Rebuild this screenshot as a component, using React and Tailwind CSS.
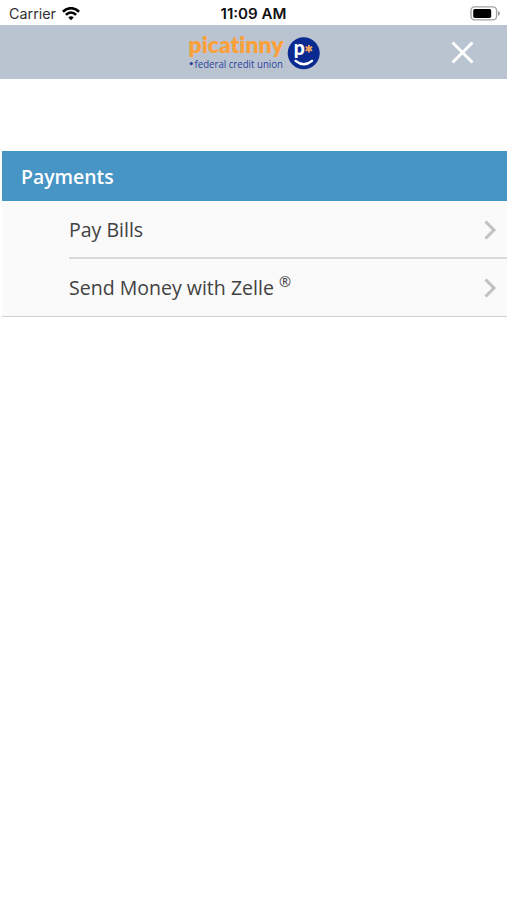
function Wifi() {
  return (
    <svg width="18" height="14" viewBox="0 0 18 14" fill="none" stroke="#000" strokeWidth="2.7">
      <path d="M.9 4.7C5.5 .1 12.5 .1 17.1 4.7" />
      <path d="M3.9 7.9C7 4.9 11 4.9 14.1 7.9" />
      <path d="M6.3 10.4C7.8 8.9 10.2 8.9 11.7 10.4L9 13.2Z" fill="#000" stroke="none" />
    </svg>
  );
}

function Battery() {
  return (
    <svg width="30" height="16" viewBox="0 0 30 16">
      <rect x="1" y=".9" width="25.6" height="13" rx="3.6" fill="#fff" stroke="#a3a3a3" strokeWidth="1.4" />
      <rect x="3.2" y="3.1" width="18" height="8.8" rx="1.6" fill="#000" />
      <path d="M28 5Q30 5.7 30 7.4T28 9.8Z" fill="#9c9c9c" />
    </svg>
  );
}

function Logo() {
  return (
    <svg width="134" height="48" viewBox="0 -4 134 48" className="block overflow-visible">
      <text x="1.5" y="20" textLength="95" lengthAdjust="spacingAndGlyphs" fontFamily="Lato, sans-serif" fontWeight="800" fontSize="23" fill="#fba03a" className="[font-variant-ligatures:none]">picatinny</text>
      <circle cx="4.3" cy="30.6" r="1.7" fill="#2a429c" />
      <text x="7.5" y="35.4" textLength="88.5" lengthAdjust="spacingAndGlyphs" fontFamily="'Open Sans', sans-serif" fontWeight="500" fontSize="11.5" fill="#2a429c">federal credit union</text>
      <circle cx="116.7" cy="20.3" r="16" fill="#0a2a92" />
      <text x="106.8" y="21.6" textLength="11" lengthAdjust="spacingAndGlyphs" fontFamily="Lato, sans-serif" fontWeight="900" fontSize="20" fill="#fff">p</text>
      <path d="M121.9 12V19.6M118.6 13.9L125.2 17.7M118.6 17.7L125.2 13.9" stroke="#f0a35c" strokeWidth="1.9" />
      <path d="M108.6 27.8Q116.8 34.6 125 27.8" fill="none" stroke="#fff" strokeWidth="2.4" strokeLinecap="round" />
    </svg>
  );
}

function Chevron() {
  return (
    <svg width="13" height="20" viewBox="0 0 13 20" fill="none" stroke="#c1c1c1" strokeWidth="3">
      <path d="M1.5 1.5L10 10L1.5 18.5" />
    </svg>
  );
}

function Row({ children }) {
  return (
    <div className="flex h-[57px] shrink-0 items-center justify-between pr-[10px]">
      <span className="text-[19.55px] leading-[28px] text-[#414141]">{children}</span>
      <Chevron />
    </div>
  );
}

export default function App() {
  return (
    <div className="h-[900px] w-[507px] overflow-hidden bg-white font-['Open_Sans','Noto_Sans',sans-serif]">
      <div className="grid h-[25px] grid-cols-3 items-center font-['Inter',sans-serif] text-[14px]">
        <div className="flex items-center gap-[6px] pl-[9px] pt-[2px] text-[#303030]">
          <svg width="47" height="18" viewBox="0 0 47 18">
            <text x="0" y="14" textLength="47" lengthAdjust="spacingAndGlyphs" fontSize="14" fill="#303030">Carrier</text>
          </svg>
          <Wifi />
        </div>
        <div className="flex justify-center pt-[2px]">
          <svg width="67" height="18" viewBox="0 0 67 18">
            <text x="0.5" y="14" textLength="66" lengthAdjust="spacingAndGlyphs" fontSize="14" fontWeight="600" fill="#111">11:09 AM</text>
          </svg>
        </div>
        <div className="flex justify-end pr-[7px] pt-[2px]"><Battery /></div>
      </div>
      <header className="grid h-[54px] grid-cols-3 items-center bg-[#bac4d1]">
        <span />
        <div className="flex justify-center pt-[1px]"><Logo /></div>
        <div className="flex justify-end pr-[33px]">
          <svg width="23" height="23" viewBox="0 0 23 23" stroke="#fff" strokeWidth="2.9">
            <path d="M1.5 1.5L21.5 21.5M21.5 1.5L1.5 21.5" />
          </svg>
        </div>
      </header>
      <main className="ml-[2px] mt-[72px]">
        <h1 className="flex h-[50px] items-center bg-[#4795c5] pl-[19px] pt-[2px] text-[19.4px] font-semibold text-white">Payments</h1>
        <div className="flex h-[116px] flex-col border-b border-[#cfcfcf] bg-[#fafafa] pl-[67px]">
          <Row>Pay Bills</Row>
          <div className="-mt-px h-[2px] shrink-0 bg-[#d9d9d9]" />
          <Row>Send Money with Zelle <sup className="top-[-7.5px] text-[14.5px] leading-none">®</sup></Row>
        </div>
      </main>
    </div>
  );
}
